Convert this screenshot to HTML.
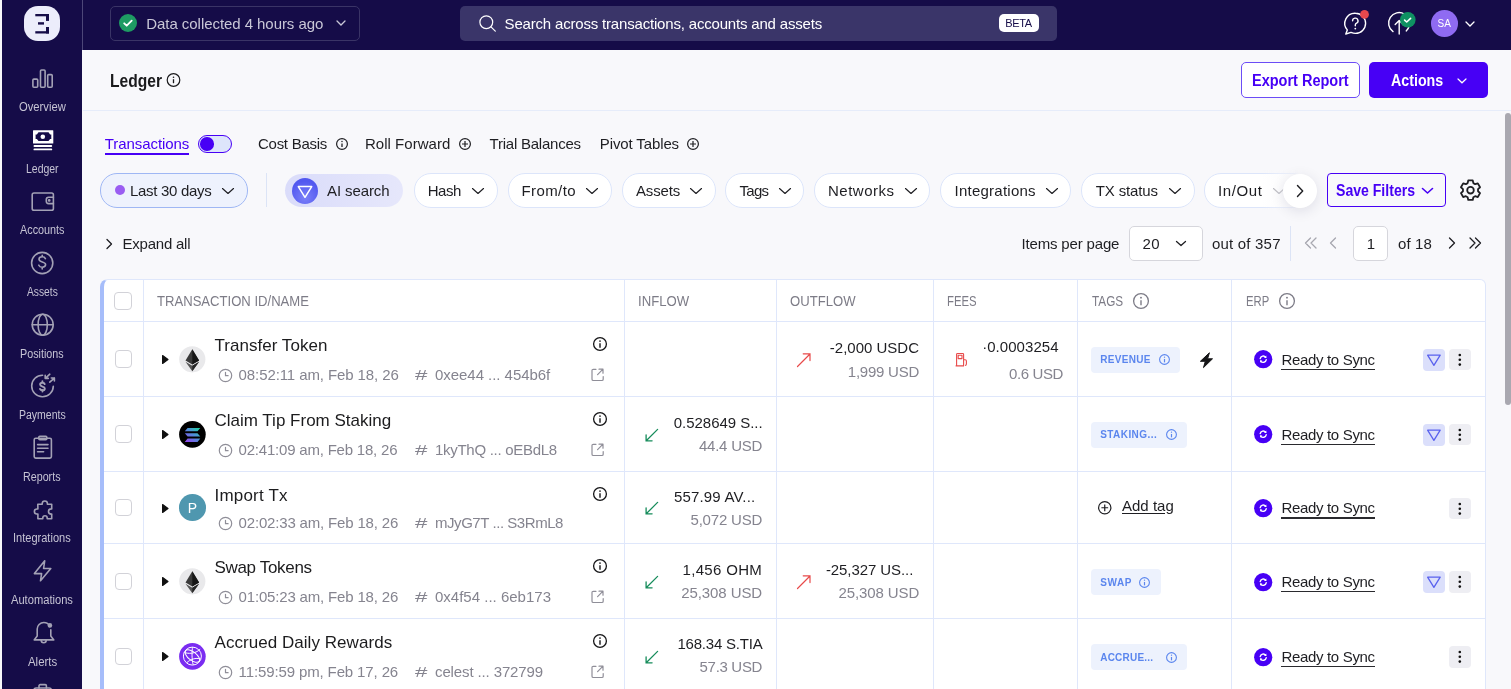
<!DOCTYPE html>
<html><head><meta charset="utf-8"><style>
html,body{margin:0;padding:0;width:1511px;height:689px;overflow:hidden;background:#F8F8FB;font-family:"Liberation Sans", sans-serif;}
svg{overflow:visible}
</style></head><body><div style="position:absolute;left:0;top:0;width:1511px;height:689px;overflow:hidden;will-change:transform">
<div style="position:absolute;left:2px;top:0px;width:80px;height:689px;background:#150C48;border-radius:0;"></div>
<div style="position:absolute;left:24px;top:6px;width:36px;height:35px;background:#ECEDFB;border-radius:14px;"></div>
<svg style="position:absolute;left:24px;top:6px;" width="36" height="35" viewBox="0 0 36 35"><g fill="#150C48"><rect x="11.3" y="8" width="13.7" height="2.3"/><rect x="22" y="8" width="3" height="6.9"/><rect x="14" y="16.2" width="6" height="2.4"/><rect x="22" y="21" width="3" height="6.5"/><rect x="11.3" y="25.2" width="13.7" height="2.3"/></g></svg>
<div style="position:absolute;left:18.70px;top:101px;font-size:12px;line-height:12px;font-weight:400;color:#C6C4D4;white-space:pre;transform:scaleX(0.9357);transform-origin:0 0;">Overview</div>
<div style="position:absolute;left:25.80px;top:163px;font-size:12px;line-height:12px;font-weight:400;color:#C6C4D4;white-space:pre;transform:scaleX(0.8722);transform-origin:0 0;">Ledger</div>
<div style="position:absolute;left:19.85px;top:224px;font-size:12px;line-height:12px;font-weight:400;color:#C6C4D4;white-space:pre;transform:scaleX(0.9016);transform-origin:0 0;">Accounts</div>
<div style="position:absolute;left:26.70px;top:286px;font-size:12px;line-height:12px;font-weight:400;color:#C6C4D4;white-space:pre;transform:scaleX(0.8552);transform-origin:0 0;">Assets</div>
<div style="position:absolute;left:20.30px;top:348px;font-size:12px;line-height:12px;font-weight:400;color:#C6C4D4;white-space:pre;transform:scaleX(0.8952);transform-origin:0 0;">Positions</div>
<div style="position:absolute;left:18.75px;top:409px;font-size:12px;line-height:12px;font-weight:400;color:#C6C4D4;white-space:pre;transform:scaleX(0.8752);transform-origin:0 0;">Payments</div>
<div style="position:absolute;left:23.35px;top:471px;font-size:12px;line-height:12px;font-weight:400;color:#C6C4D4;white-space:pre;transform:scaleX(0.8922);transform-origin:0 0;">Reports</div>
<div style="position:absolute;left:13.25px;top:532px;font-size:12px;line-height:12px;font-weight:400;color:#C6C4D4;white-space:pre;transform:scaleX(0.9200);transform-origin:0 0;">Integrations</div>
<div style="position:absolute;left:11.15px;top:594px;font-size:12px;line-height:12px;font-weight:400;color:#C6C4D4;white-space:pre;transform:scaleX(0.9280);transform-origin:0 0;">Automations</div>
<div style="position:absolute;left:27.50px;top:656px;font-size:12px;line-height:12px;font-weight:400;color:#C6C4D4;white-space:pre;transform:scaleX(0.9515);transform-origin:0 0;">Alerts</div>
<svg style="position:absolute;left:22px;top:60px;" width="40" height="40" viewBox="0 0 40 40"><g stroke-width="1.6" fill="none" stroke="#A3A1B5" stroke-linecap="round" stroke-linejoin="round"><rect x="10.9" y="19.1" width="4.8" height="8.1" rx="1"/><rect x="18.5" y="10" width="4.6" height="17.2" rx="1"/><rect x="25.7" y="14.6" width="4.5" height="12.6" rx="1"/></g></svg>
<svg style="position:absolute;left:22px;top:120px;" width="40" height="40" viewBox="0 0 40 40"><path fill="#fff" fill-rule="evenodd" d="M11.5 10.2h19.3a0.5 0.5 0 0 1 .5.5v12.4a.5.5 0 0 1-.5.5H11.5a.5.5 0 0 1-.5-.5V10.7a.5.5 0 0 1 .5-.5zM16.5 12.3h10l1.6 2.2 0.8 0h0.4v4.6h-1.2l-1.6 2h-10l-1.6-2h-1.3v-4.6h1.3z"/><circle cx="20.8" cy="16.8" r="2.3" fill="#fff"/><rect x="11.5" y="25.1" width="18.7" height="1.9" rx=".9" fill="#fff"/><rect x="11.5" y="28.4" width="18.7" height="1.9" rx=".9" fill="#fff"/></svg>
<svg style="position:absolute;left:22px;top:182px;" width="40" height="40" viewBox="0 0 40 40"><g stroke-width="1.6" fill="none" stroke="#A3A1B5" stroke-linecap="round" stroke-linejoin="round"><rect x="10.2" y="11" width="21.2" height="17.2" rx="1.8"/><path d="M31.4 15.2h-4.8a2.3 2.3 0 0 0-2.3 2.3v1.8a2.3 2.3 0 0 0 2.3 2.3h4.8"/><circle cx="27.2" cy="18.4" r=".6" fill="#A3A1B5"/></g></svg>
<svg style="position:absolute;left:22px;top:243px;" width="40" height="40" viewBox="0 0 40 40"><g stroke-width="1.6" fill="none" stroke="#A3A1B5" stroke-linecap="round" stroke-linejoin="round"><circle cx="20.2" cy="20" r="10.6"/><path d="M23.4 15.6c-.5-1.1-1.7-1.8-3.2-1.8-1.9 0-3.2 1-3.2 2.5 0 3.4 6.6 1.8 6.6 5.3 0 1.6-1.4 2.6-3.4 2.6-1.6 0-2.9-.8-3.4-2M20.2 12.2v1.6M20.2 24.2v1.7"/></g></svg>
<svg style="position:absolute;left:22px;top:304px;" width="40" height="40" viewBox="0 0 40 40"><g stroke-width="1.6" fill="none" stroke="#A3A1B5" stroke-linecap="round" stroke-linejoin="round"><circle cx="20.7" cy="20.7" r="10.5"/><ellipse cx="20.7" cy="20.7" rx="4.6" ry="10.5"/><path d="M10.2 20.7h21"/></g></svg>
<svg style="position:absolute;left:22px;top:365px;" width="40" height="40" viewBox="0 0 40 40"><g stroke-width="1.6" fill="none" stroke="#A3A1B5" stroke-linecap="round" stroke-linejoin="round"><path d="M20.6 10.2a10.8 10.8 0 1 0 10.7 11"/><path d="M27.8 9.2l-4.5 4.1M23.2 10.4v3h3.1M27.8 17.2l4.6-4.1M29.3 13h3.1v3"/><path d="M22.7 19.1c-.3-.8-1.2-1.3-2.3-1.3-1.3 0-2.3.7-2.3 1.8 0 2.5 4.7 1.4 4.7 3.8 0 1.1-1 1.9-2.4 1.9-1.1 0-2.1-.5-2.4-1.4M20.4 16.2v1.4M20.4 25v1.5" stroke-width="1.9"/></g></svg>
<svg style="position:absolute;left:22px;top:427px;" width="40" height="40" viewBox="0 0 40 40"><g stroke-width="1.6" fill="none" stroke="#A3A1B5" stroke-linecap="round" stroke-linejoin="round"><rect x="12.2" y="11.2" width="17.2" height="19.9" rx="1.5"/><rect x="16.8" y="9.2" width="8" height="3.6" rx="1"/><path d="M15.6 17.6h10.4M15.6 21.2h10.4M15.6 24.8h6"/></g></svg>
<svg style="position:absolute;left:22px;top:490px;" width="40" height="40" viewBox="0 0 40 40"><g stroke-width="1.6" fill="none" stroke="#A3A1B5" stroke-linecap="round" stroke-linejoin="round"><path d="M15.8 14.3h4.4v-.7a2.6 2.6 0 0 1 5.2 0v.7h4.3v4.6h-.6a2.6 2.6 0 0 0 0 5.2h.6v4.7h-4.5v-.9a2.2 2.2 0 0 0-4.4 0v.9h-4.9v-4.8h-1a2.5 2.5 0 0 1 0-5h1z"/></g></svg>
<svg style="position:absolute;left:22px;top:550px;" width="40" height="40" viewBox="0 0 40 40"><g stroke-width="1.6" fill="none" stroke="#A3A1B5" stroke-linecap="round" stroke-linejoin="round"><path d="M22.7 10.8L12.4 23.6h7.2l-1.1 7.2 10.3-12.3h-7.2z"/></g></svg>
<svg style="position:absolute;left:22px;top:612px;" width="40" height="40" viewBox="0 0 40 40"><g stroke-width="1.6" fill="none" stroke="#A3A1B5" stroke-linecap="round" stroke-linejoin="round"><path d="M27.8 14.4c-1-2.3-3.3-3.9-6-3.9-3.7 0-6.6 3-6.6 6.6v6.8l-3 4h19.6l-3-4v-6.2"/><path d="M19.2 28.2a2.5 2.5 0 0 0 5 0"/></g><circle cx="27.9" cy="13.4" r="2.3" fill="#A3A1B5"/></svg>
<svg style="position:absolute;left:22px;top:678px;" width="40" height="20" viewBox="0 0 40 20"><g stroke-width="1.6" fill="none" stroke="#A3A1B5" stroke-linecap="round" stroke-linejoin="round"><rect x="12" y="10" width="17.3" height="14" rx="2"/><path d="M17 10V7.8a1.2 1.2 0 0 1 1.2-1.2h5a1.2 1.2 0 0 1 1.2 1.2V10"/></g></svg>
<div style="position:absolute;left:82px;top:0px;width:1429px;height:50px;background:#150C48;border-radius:0;"></div>
<div style="position:absolute;left:82px;top:0px;width:1px;height:50px;background:#4D4778;border-radius:0;"></div>
<div style="position:absolute;left:109.5px;top:6px;width:250.5px;height:34.5px;background:transparent;border:1px solid #3A3466;box-sizing:border-box;border-radius:5px;"></div>
<svg style="position:absolute;left:119px;top:14px;" width="18" height="18" viewBox="0 0 18 18"><circle cx="9" cy="9" r="9" fill="#1E9B63"/><path d="M5.2 9.3l2.5 2.4 5-5" stroke="#fff" stroke-width="1.8" fill="none" stroke-linecap="round" stroke-linejoin="round"/></svg>
<div style="position:absolute;left:146.30px;top:16px;font-size:15px;line-height:15px;font-weight:400;color:#C9C7D7;white-space:pre;letter-spacing:-0.056px;">Data collected 4 hours ago</div>
<svg style="position:absolute;left:335px;top:19px;" width="12" height="8" viewBox="0 0 12 8"><path d="M2 2l4 4 4-4" stroke="#C9C7D7" stroke-width="1.3" fill="none" stroke-linecap="round"/></svg>
<div style="position:absolute;left:459.5px;top:6px;width:597.5px;height:34.5px;background:#3A3569;border-radius:5px;"></div>
<svg style="position:absolute;left:478px;top:14px;" width="20" height="20" viewBox="0 0 20 20"><circle cx="8.3" cy="8.2" r="6.4" stroke="#fff" stroke-width="1.2" fill="none"/><path d="M13 12.8l4.3 4.3" stroke="#fff" stroke-width="1.2" stroke-linecap="round"/></svg>
<div style="position:absolute;left:504.60px;top:16px;font-size:15px;line-height:15px;font-weight:400;color:#FFFFFF;white-space:pre;letter-spacing:-0.183px;">Search across transactions, accounts and assets</div>
<div style="position:absolute;left:998.5px;top:14px;width:40px;height:18px;background:#FFFFFF;border-radius:5px;"></div>
<div style="position:absolute;left:1005.20px;top:18.3px;font-size:11px;line-height:11px;font-weight:400;color:#150C48;white-space:pre;letter-spacing:-0.330px;">BETA</div>
<svg style="position:absolute;left:1340px;top:9px;" width="32" height="28" viewBox="0 0 32 28"><path d="M15.5 4.2a10.1 10.1 0 0 1 0 20.2c-1.6 0-3.1-.4-4.5-1l-5.2 1.6 1.5-4.1A10.1 10.1 0 0 1 15.5 4.2z" stroke="#fff" stroke-width="1.4" fill="none" stroke-linejoin="round"/><path d="M12.6 11.8a2.7 2.7 0 1 1 4 2.4c-.8.4-1.3 1-1.3 1.9v.7" stroke="#fff" stroke-width="1.4" fill="none" stroke-linecap="round"/><circle cx="15.3" cy="19.6" r=".9" fill="#fff"/><circle cx="24.5" cy="5.4" r="4.4" fill="#E5484D"/></svg>
<svg style="position:absolute;left:1385px;top:8px;" width="34" height="30" viewBox="0 0 34 30"><path d="M8.03 23.6A10.5 10.5 0 0 1 19.45 6.0M21.2 22.9A10.5 10.5 0 0 0 24.3 17.8" stroke="#fff" stroke-width="1.4" fill="none" stroke-linecap="round"/><path d="M14.2 26.1V12.4M10.2 16.4l4-4 4 4" stroke="#fff" stroke-width="1.4" fill="none" stroke-linecap="round" stroke-linejoin="round"/><circle cx="22.8" cy="11.8" r="7.8" fill="#0F9162"/><path d="M19.6 12.1l2.1 1.9 3.9-3.7" stroke="#fff" stroke-width="1.6" fill="none" stroke-linecap="round" stroke-linejoin="round"/></svg>
<div style="position:absolute;left:1431px;top:10px;width:26.5px;height:26.5px;background:#8F6BF2;border-radius:50%;"></div>
<div style="position:absolute;left:1437.53px;top:19px;font-size:10px;line-height:10px;font-weight:400;color:#FFFFFF;white-space:pre;">SA</div>
<svg style="position:absolute;left:1464px;top:20px;" width="12" height="8" viewBox="0 0 12 8"><path d="M2 2l4 4 4-4" stroke="#fff" stroke-width="1.3" fill="none" stroke-linecap="round"/></svg>
<div style="position:absolute;left:83px;top:110px;width:1428px;height:1px;background:#E6ECFA;border-radius:0;"></div>
<div style="position:absolute;left:109.70px;top:72px;font-size:18px;line-height:18px;font-weight:700;color:#1A1A1C;white-space:pre;transform:scaleX(0.8664);transform-origin:0 0;">Ledger</div>
<svg style="position:absolute;left:166px;top:73px;" width="15" height="15" viewBox="0 0 15 15"><circle cx="7.5" cy="7" r="6.3" stroke="#1A1A1C" stroke-width="1.2" fill="none"/><path d="M7.5 6.2v4" stroke="#1A1A1C" stroke-width="1.3"/><circle cx="7.5" cy="4.2" r=".8" fill="#1A1A1C"/></svg>
<div style="position:absolute;left:1241px;top:62px;width:119px;height:35.5px;background:#FFFFFF;border:1.5px solid #6C4DF6;box-sizing:border-box;border-radius:5px;"></div>
<div style="position:absolute;left:1252.30px;top:72.6px;font-size:16px;line-height:16px;font-weight:700;color:#4700F5;white-space:pre;transform:scaleX(0.9065);transform-origin:0 0;">Export Report</div>
<div style="position:absolute;left:1369px;top:62px;width:118.5px;height:35.5px;background:#4700F5;border-radius:5px;"></div>
<div style="position:absolute;left:1390.80px;top:72.6px;font-size:16px;line-height:16px;font-weight:700;color:#FFFFFF;white-space:pre;transform:scaleX(0.8897);transform-origin:0 0;">Actions</div>
<svg style="position:absolute;left:1455.5px;top:77px;" width="12" height="8" viewBox="0 0 12 8"><path d="M2 2l4 3.8 4-3.8" stroke="#fff" stroke-width="1.2" fill="none" stroke-linecap="round"/></svg>
<div style="position:absolute;left:104.80px;top:135.6px;font-size:15px;line-height:15px;font-weight:400;color:#4700F5;white-space:pre;letter-spacing:-0.068px;">Transactions</div>
<div style="position:absolute;left:104.8px;top:152.5px;width:84.5px;height:2px;background:#4700F5;border-radius:0;"></div>
<div style="position:absolute;left:198px;top:135px;width:34px;height:17.5px;background:#DDE5FB;border:1.5px solid #4700F5;box-sizing:border-box;border-radius:9px;"></div>
<div style="position:absolute;left:200.2px;top:137px;width:13.6px;height:13.6px;background:#4700F5;border-radius:50%;"></div>
<div style="position:absolute;left:258.00px;top:135.6px;font-size:15px;line-height:15px;font-weight:400;color:#1E1E22;white-space:pre;letter-spacing:-0.270px;">Cost Basis</div>
<svg style="position:absolute;left:335px;top:137px;" width="14" height="14" viewBox="0 0 14 14"><circle cx="7.0" cy="7.0" r="5.4" stroke="#1E1E22" stroke-width="1.2" fill="none"/><path d="M7.0 6.4v3.7199999999999998" stroke="#1E1E22" stroke-width="1.3"/><circle cx="7.0" cy="4.48" r="0.72" fill="#1E1E22"/></svg>
<div style="position:absolute;left:365.00px;top:135.6px;font-size:15px;line-height:15px;font-weight:400;color:#1E1E22;white-space:pre;letter-spacing:0.022px;">Roll Forward</div>
<svg style="position:absolute;left:457.5px;top:137.3px;" width="14" height="14" viewBox="0 0 14 14"><circle cx="7.0" cy="7.0" r="5.4" stroke="#1E1E22" stroke-width="1.2" fill="none"/><path d="M4.0 7.0h6.0M7.0 4.0v6.0" stroke="#1E1E22" stroke-width="1.2"/></svg>
<div style="position:absolute;left:489.60px;top:135.6px;font-size:15px;line-height:15px;font-weight:400;color:#1E1E22;white-space:pre;letter-spacing:-0.235px;">Trial Balances</div>
<div style="position:absolute;left:599.80px;top:135.6px;font-size:15px;line-height:15px;font-weight:400;color:#1E1E22;white-space:pre;letter-spacing:-0.117px;">Pivot Tables</div>
<svg style="position:absolute;left:686px;top:137.3px;" width="14" height="14" viewBox="0 0 14 14"><circle cx="7.0" cy="7.0" r="5.4" stroke="#1E1E22" stroke-width="1.2" fill="none"/><path d="M4.0 7.0h6.0M7.0 4.0v6.0" stroke="#1E1E22" stroke-width="1.2"/></svg>
<div style="position:absolute;left:100px;top:173px;width:148px;height:34.5px;background:#EEF2FD;border:1px solid #9FB7F4;box-sizing:border-box;border-radius:17px;"></div>
<div style="position:absolute;left:114.5px;top:185px;width:10px;height:10px;background:#9A5DF2;border-radius:50%;"></div>
<div style="position:absolute;left:130.00px;top:182.7px;font-size:15px;line-height:15px;font-weight:400;color:#1E1E22;white-space:pre;letter-spacing:-0.297px;">Last 30 days</div>
<svg style="position:absolute;left:221px;top:186.5px;" width="13" height="8" viewBox="0 0 13 8"><path d="M1.5 1.5l5.5 5.0 5.5-5.0" stroke="#1E1E22" stroke-width="1.15" fill="none" stroke-linecap="round" stroke-linejoin="round"/></svg>
<div style="position:absolute;left:266px;top:173px;width:1px;height:34px;background:#DCE4F6;border-radius:0;"></div>
<div style="position:absolute;left:284.6px;top:174px;width:118.4px;height:33px;background:linear-gradient(90deg,#DADCFA,#E6E7FB);border-radius:17px;"></div>
<div style="position:absolute;left:292px;top:177.5px;width:26px;height:26px;background:radial-gradient(circle at 50% 75%,#7B80F8,#5258F0 70%);border-radius:50%;"></div>
<svg style="position:absolute;left:292px;top:177.5px;" width="26" height="26" viewBox="0 0 26 26"><path d="M6.3 8.6h13.4L13 19.3z" stroke="#fff" stroke-width="1.5" fill="none" stroke-linejoin="round"/></svg>
<div style="position:absolute;left:327.00px;top:182.7px;font-size:15px;line-height:15px;font-weight:400;color:#1E1E22;white-space:pre;letter-spacing:-0.097px;">AI search</div>
<div style="position:absolute;left:413.5px;top:173px;width:84.10000000000002px;height:34.5px;background:#FFFFFF;border:1px solid #DCE5FA;box-sizing:border-box;border-radius:17px;"></div>
<div style="position:absolute;left:427.70px;top:182.7px;font-size:15px;line-height:15px;font-weight:400;color:#1E1E22;white-space:pre;letter-spacing:-0.433px;">Hash</div>
<svg style="position:absolute;left:471px;top:186.5px;" width="13" height="8" viewBox="0 0 13 8"><path d="M1.5 1.5l5.5 5.0 5.5-5.0" stroke="#1E1E22" stroke-width="1.15" fill="none" stroke-linecap="round" stroke-linejoin="round"/></svg>
<div style="position:absolute;left:507.8px;top:173px;width:104.40000000000003px;height:34.5px;background:#FFFFFF;border:1px solid #DCE5FA;box-sizing:border-box;border-radius:17px;"></div>
<div style="position:absolute;left:521.50px;top:182.7px;font-size:15px;line-height:15px;font-weight:400;color:#1E1E22;white-space:pre;letter-spacing:0.402px;">From/to</div>
<svg style="position:absolute;left:585px;top:186.5px;" width="13" height="8" viewBox="0 0 13 8"><path d="M1.5 1.5l5.5 5.0 5.5-5.0" stroke="#1E1E22" stroke-width="1.15" fill="none" stroke-linecap="round" stroke-linejoin="round"/></svg>
<div style="position:absolute;left:622px;top:173px;width:94px;height:34.5px;background:#FFFFFF;border:1px solid #DCE5FA;box-sizing:border-box;border-radius:17px;"></div>
<div style="position:absolute;left:636.00px;top:182.7px;font-size:15px;line-height:15px;font-weight:400;color:#1E1E22;white-space:pre;letter-spacing:-0.169px;">Assets</div>
<svg style="position:absolute;left:689px;top:186.5px;" width="13" height="8" viewBox="0 0 13 8"><path d="M1.5 1.5l5.5 5.0 5.5-5.0" stroke="#1E1E22" stroke-width="1.15" fill="none" stroke-linecap="round" stroke-linejoin="round"/></svg>
<div style="position:absolute;left:725.3px;top:173px;width:79.10000000000002px;height:34.5px;background:#FFFFFF;border:1px solid #DCE5FA;box-sizing:border-box;border-radius:17px;"></div>
<div style="position:absolute;left:739.50px;top:182.7px;font-size:15px;line-height:15px;font-weight:400;color:#1E1E22;white-space:pre;letter-spacing:-0.697px;">Tags</div>
<svg style="position:absolute;left:777.7px;top:186.5px;" width="13" height="8" viewBox="0 0 13 8"><path d="M1.5 1.5l5.5 5.0 5.5-5.0" stroke="#1E1E22" stroke-width="1.15" fill="none" stroke-linecap="round" stroke-linejoin="round"/></svg>
<div style="position:absolute;left:814px;top:173px;width:116px;height:34.5px;background:#FFFFFF;border:1px solid #DCE5FA;box-sizing:border-box;border-radius:17px;"></div>
<div style="position:absolute;left:828.00px;top:182.7px;font-size:15px;line-height:15px;font-weight:400;color:#1E1E22;white-space:pre;letter-spacing:0.498px;">Networks</div>
<svg style="position:absolute;left:903.8px;top:186.5px;" width="13" height="8" viewBox="0 0 13 8"><path d="M1.5 1.5l5.5 5.0 5.5-5.0" stroke="#1E1E22" stroke-width="1.15" fill="none" stroke-linecap="round" stroke-linejoin="round"/></svg>
<div style="position:absolute;left:940.3px;top:173px;width:131.0px;height:34.5px;background:#FFFFFF;border:1px solid #DCE5FA;box-sizing:border-box;border-radius:17px;"></div>
<div style="position:absolute;left:954.50px;top:182.7px;font-size:15px;line-height:15px;font-weight:400;color:#1E1E22;white-space:pre;letter-spacing:0.242px;">Integrations</div>
<svg style="position:absolute;left:1044.6px;top:186.5px;" width="13" height="8" viewBox="0 0 13 8"><path d="M1.5 1.5l5.5 5.0 5.5-5.0" stroke="#1E1E22" stroke-width="1.15" fill="none" stroke-linecap="round" stroke-linejoin="round"/></svg>
<div style="position:absolute;left:1081px;top:173px;width:113.5px;height:34.5px;background:#FFFFFF;border:1px solid #DCE5FA;box-sizing:border-box;border-radius:17px;"></div>
<div style="position:absolute;left:1095.80px;top:182.7px;font-size:15px;line-height:15px;font-weight:400;color:#1E1E22;white-space:pre;letter-spacing:-0.151px;">TX status</div>
<svg style="position:absolute;left:1168px;top:186.5px;" width="13" height="8" viewBox="0 0 13 8"><path d="M1.5 1.5l5.5 5.0 5.5-5.0" stroke="#1E1E22" stroke-width="1.15" fill="none" stroke-linecap="round" stroke-linejoin="round"/></svg>
<div style="position:absolute;left:1204px;top:173px;width:106px;height:34.5px;background:#FFFFFF;border:1px solid #DCE5FA;box-sizing:border-box;border-radius:17px;"></div>
<div style="position:absolute;left:1218.00px;top:182.7px;font-size:15px;line-height:15px;font-weight:400;color:#1E1E22;white-space:pre;letter-spacing:0.623px;">In/Out</div>
<svg style="position:absolute;left:1272px;top:186.5px;" width="13" height="8" viewBox="0 0 13 8"><path d="M1.5 1.5l5.5 5.0 5.5-5.0" stroke="#A9A9B0" stroke-width="1.15" fill="none" stroke-linecap="round" stroke-linejoin="round"/></svg>
<div style="position:absolute;left:1262px;top:170px;width:40px;height:40px;background:linear-gradient(90deg,rgba(248,248,251,0),rgba(248,248,251,.85));border-radius:0;"></div>
<div style="position:absolute;left:1282.5px;top:173.5px;width:34px;height:34px;background:#FFFFFF;border-radius:50%;box-shadow:0 3px 14px rgba(20,20,60,.11);"></div>
<svg style="position:absolute;left:1294px;top:184px;" width="14" height="14" viewBox="0 0 14 14"><path d="M3.5 1.5l5.2 5.5-5.2 5.5" stroke="#1E1E22" stroke-width="1.4" fill="none" stroke-linecap="round" stroke-linejoin="round"/></svg>
<div style="position:absolute;left:1327px;top:173.3px;width:119px;height:34.2px;background:transparent;border:1.5px solid #4700F5;box-sizing:border-box;border-radius:4px;"></div>
<div style="position:absolute;left:1336.00px;top:183px;font-size:16px;line-height:16px;font-weight:700;color:#4700F5;white-space:pre;transform:scaleX(0.8795);transform-origin:0 0;">Save Filters</div>
<svg style="position:absolute;left:1421px;top:187px;" width="12" height="8" viewBox="0 0 12 8"><path d="M1.5 1.5l5.0 4.5 5.0-4.5" stroke="#4700F5" stroke-width="1.6" fill="none" stroke-linecap="round" stroke-linejoin="round"/></svg>
<svg style="position:absolute;left:1458.5px;top:179px;" width="23" height="23" viewBox="0 0 23 23"><path d="M19.03 12.26 L21.06 14.12 L18.81 18.02 L16.18 17.19 L14.35 18.25 L13.75 20.94 L9.25 20.94 L8.65 18.25 L6.82 17.19 L4.19 18.02 L1.94 14.12 L3.97 12.26 L3.97 10.14 L1.94 8.28 L4.19 4.38 L6.82 5.21 L8.65 4.15 L9.25 1.46 L13.75 1.46 L14.35 4.15 L16.18 5.21 L18.81 4.38 L21.06 8.28 L19.03 10.14Z" stroke="#1E1E22" stroke-width="1.8" fill="none" stroke-linejoin="round"/><circle cx="11.5" cy="11.2" r="3.3" stroke="#1E1E22" stroke-width="1.8" fill="none"/></svg>
<svg style="position:absolute;left:104px;top:238px;" width="12" height="12" viewBox="0 0 12 12"><path d="M3 1.5l4.5 4.5L3 10.5" stroke="#1E1E22" stroke-width="1.3" fill="none" stroke-linecap="round" stroke-linejoin="round"/></svg>
<div style="position:absolute;left:122.50px;top:235.8px;font-size:15px;line-height:15px;font-weight:400;color:#1E1E22;white-space:pre;letter-spacing:-0.226px;">Expand all</div>
<div style="position:absolute;left:1021.50px;top:236px;font-size:15px;line-height:15px;font-weight:400;color:#1E1E22;white-space:pre;letter-spacing:-0.162px;">Items per page</div>
<div style="position:absolute;left:1129px;top:226px;width:74px;height:34.5px;background:#FFFFFF;border:1px solid #D6D6DC;box-sizing:border-box;border-radius:5px;"></div>
<div style="position:absolute;left:1142.40px;top:236px;font-size:15px;line-height:15px;font-weight:400;color:#1E1E22;white-space:pre;letter-spacing:0.456px;">20</div>
<svg style="position:absolute;left:1175px;top:240px;" width="11" height="8" viewBox="0 0 11 8"><path d="M1.5 1.5l4.5 4.0 4.5-4.0" stroke="#1E1E22" stroke-width="1.3" fill="none" stroke-linecap="round" stroke-linejoin="round"/></svg>
<div style="position:absolute;left:1212.00px;top:236px;font-size:15px;line-height:15px;font-weight:400;color:#1E1E22;white-space:pre;letter-spacing:0.197px;">out of 357</div>
<div style="position:absolute;left:1290px;top:226px;width:1px;height:34.7px;background:#DCE4F6;border-radius:0;"></div>
<svg style="position:absolute;left:1303px;top:236px;" width="16" height="14" viewBox="0 0 16 14"><path d="M7.5 2l-5 5 5 5M13 2l-5 5 5 5" stroke="#A7A7AF" stroke-width="1.3" fill="none" stroke-linecap="round" stroke-linejoin="round"/></svg>
<svg style="position:absolute;left:1327px;top:236px;" width="12" height="14" viewBox="0 0 12 14"><path d="M8.5 2l-5 5 5 5" stroke="#A7A7AF" stroke-width="1.3" fill="none" stroke-linecap="round" stroke-linejoin="round"/></svg>
<div style="position:absolute;left:1353px;top:226px;width:35.4px;height:34.5px;background:#FFFFFF;border:1px solid #D6D6DC;box-sizing:border-box;border-radius:5px;"></div>
<div style="position:absolute;left:1366.83px;top:236px;font-size:15px;line-height:15px;font-weight:400;color:#1E1E22;white-space:pre;">1</div>
<div style="position:absolute;left:1398.00px;top:236px;font-size:15px;line-height:15px;font-weight:400;color:#1E1E22;white-space:pre;letter-spacing:0.125px;">of 18</div>
<svg style="position:absolute;left:1446px;top:236px;" width="12" height="14" viewBox="0 0 12 14"><path d="M3.5 2l5 5-5 5" stroke="#1E1E22" stroke-width="1.3" fill="none" stroke-linecap="round" stroke-linejoin="round"/></svg>
<svg style="position:absolute;left:1467px;top:236px;" width="16" height="14" viewBox="0 0 16 14"><path d="M3 2l5 5-5 5M8.5 2l5 5-5 5" stroke="#1E1E22" stroke-width="1.3" fill="none" stroke-linecap="round" stroke-linejoin="round"/></svg>
<div style="position:absolute;left:100px;top:279px;width:1386px;height:420px;background:#FFFFFF;border:1px solid #DFE7FB;box-sizing:border-box;border-radius:8px 6px 0 0;border-left:4px solid #A6BDFA;"></div>
<div style="position:absolute;left:143px;top:280px;width:1px;height:420px;background:#DFE7FB;border-radius:0;"></div>
<div style="position:absolute;left:624px;top:280px;width:1px;height:420px;background:#DFE7FB;border-radius:0;"></div>
<div style="position:absolute;left:776px;top:280px;width:1px;height:420px;background:#DFE7FB;border-radius:0;"></div>
<div style="position:absolute;left:933px;top:280px;width:1px;height:420px;background:#DFE7FB;border-radius:0;"></div>
<div style="position:absolute;left:1077px;top:280px;width:1px;height:420px;background:#DFE7FB;border-radius:0;"></div>
<div style="position:absolute;left:1231px;top:280px;width:1px;height:420px;background:#DFE7FB;border-radius:0;"></div>
<div style="position:absolute;left:104px;top:321px;width:1381px;height:1px;background:#DFE7FB;border-radius:0;"></div>
<div style="position:absolute;left:104px;top:396px;width:1381px;height:1px;background:#DFE7FB;border-radius:0;"></div>
<div style="position:absolute;left:104px;top:471px;width:1381px;height:1px;background:#DFE7FB;border-radius:0;"></div>
<div style="position:absolute;left:104px;top:543px;width:1381px;height:1px;background:#DFE7FB;border-radius:0;"></div>
<div style="position:absolute;left:104px;top:618px;width:1381px;height:1px;background:#DFE7FB;border-radius:0;"></div>
<div style="position:absolute;left:114.4px;top:292.3px;width:17.4px;height:17.4px;background:#FFFFFF;border:1px solid #D2D2D8;box-sizing:border-box;border-radius:4px;"></div>
<div style="position:absolute;left:157.00px;top:294.3px;font-size:14px;line-height:14px;font-weight:400;color:#7D7C87;white-space:pre;transform:scaleX(0.9349);transform-origin:0 0;">TRANSACTION ID/NAME</div>
<div style="position:absolute;left:638.40px;top:294.3px;font-size:14px;line-height:14px;font-weight:400;color:#7D7C87;white-space:pre;transform:scaleX(0.9384);transform-origin:0 0;">INFLOW</div>
<div style="position:absolute;left:790.00px;top:294.3px;font-size:14px;line-height:14px;font-weight:400;color:#7D7C87;white-space:pre;transform:scaleX(0.9357);transform-origin:0 0;">OUTFLOW</div>
<div style="position:absolute;left:946.80px;top:294.3px;font-size:14px;line-height:14px;font-weight:400;color:#7D7C87;white-space:pre;transform:scaleX(0.8092);transform-origin:0 0;">FEES</div>
<div style="position:absolute;left:1091.50px;top:294.3px;font-size:14px;line-height:14px;font-weight:400;color:#7D7C87;white-space:pre;transform:scaleX(0.8388);transform-origin:0 0;">TAGS</div>
<svg style="position:absolute;left:1131.8px;top:292px;" width="18" height="18" viewBox="0 0 18 18"><circle cx="9.0" cy="9.0" r="7.4" stroke="#7D7C87" stroke-width="1.3" fill="none"/><path d="M9.0 8.2v4.96" stroke="#7D7C87" stroke-width="1.4000000000000001"/><circle cx="9.0" cy="5.640000000000001" r="0.96" fill="#7D7C87"/></svg>
<div style="position:absolute;left:1245.80px;top:294.3px;font-size:14px;line-height:14px;font-weight:400;color:#7D7C87;white-space:pre;transform:scaleX(0.8056);transform-origin:0 0;">ERP</div>
<svg style="position:absolute;left:1278px;top:292px;" width="18" height="18" viewBox="0 0 18 18"><circle cx="9.0" cy="9.0" r="7.4" stroke="#7D7C87" stroke-width="1.3" fill="none"/><path d="M9.0 8.2v4.96" stroke="#7D7C87" stroke-width="1.4000000000000001"/><circle cx="9.0" cy="5.640000000000001" r="0.96" fill="#7D7C87"/></svg>
<div style="position:absolute;left:114.5px;top:350.25000000000006px;width:17.4px;height:17.4px;background:#FFFFFF;border:1px solid #D2D2D8;box-sizing:border-box;border-radius:4px;"></div>
<svg style="position:absolute;left:160.5px;top:353.95000000000005px;" width="9" height="11" viewBox="0 0 9 11"><path d="M1.6 1.6l5.4 3.9-5.4 3.9z" fill="#111" stroke="#111" stroke-width="1.2" stroke-linejoin="round"/></svg>
<svg style="position:absolute;left:179px;top:345.65000000000003px;" width="27" height="27" viewBox="0 0 27 27"><circle cx="13.3" cy="13.3" r="13.1" fill="#E9E9EB"/><path d="M13.3 3.2L6.5 14.4l6.8 4 6.8-4z" fill="#3A3A3A"/><path d="M13.3 3.2v15.2l6.8-4z" fill="#161616"/><path d="M13.3 19.8l-6.8-4 6.8 9.4 6.8-9.4z" fill="#555"/><path d="M13.3 19.8v5.4l6.8-9.4z" fill="#262626"/></svg>
<div style="position:absolute;left:214.50px;top:336.8px;font-size:17px;line-height:17px;font-weight:400;color:#1C1C1E;white-space:pre;letter-spacing:0.032px;">Transfer Token</div>
<svg style="position:absolute;left:218px;top:368.20000000000005px;" width="15" height="15" viewBox="0 0 15 15"><circle cx="7.5" cy="7.5" r="6.2" stroke="#8F8E98" stroke-width="1.2" fill="none"/><path d="M7.5 4.3v3.4h2.6" stroke="#8F8E98" stroke-width="1.2" fill="none" stroke-linecap="round"/></svg>
<div style="position:absolute;left:238.60px;top:367.20000000000005px;font-size:15px;line-height:15px;font-weight:400;color:#85848F;white-space:pre;letter-spacing:-0.098px;">08:52:11 am, Feb 18, 26</div>
<div style="position:absolute;left:414.90px;top:367.20000000000005px;font-size:15px;line-height:15px;font-weight:400;color:#85848F;white-space:pre;transform:scaleX(1.4861);transform-origin:0 0;">#</div>
<div style="position:absolute;left:435.00px;top:367.20000000000005px;font-size:15px;line-height:15px;font-weight:400;color:#85848F;white-space:pre;letter-spacing:-0.043px;">0xee44 ... 454b6f</div>
<svg style="position:absolute;left:592.2px;top:336.20000000000005px;" width="16" height="16" viewBox="0 0 16 16"><circle cx="8.0" cy="8.0" r="6.4" stroke="#151517" stroke-width="1.3" fill="none"/><path d="M8.0 7.3v4.34" stroke="#151517" stroke-width="1.4000000000000001"/><circle cx="8.0" cy="5.0600000000000005" r="0.84" fill="#151517"/></svg>
<svg style="position:absolute;left:589.5px;top:367.20000000000005px;" width="15" height="15" viewBox="0 0 15 15"><path d="M6 2.3H3.3a1.3 1.3 0 0 0-1.3 1.3v8.6a1.3 1.3 0 0 0 1.3 1.3h8.6a1.3 1.3 0 0 0 1.3-1.3V9.5M9 2.2h4v4M13 2.2L7.6 7.6" stroke="#8F8E98" stroke-width="1.2" fill="none" stroke-linecap="round" stroke-linejoin="round"/></svg>
<svg style="position:absolute;left:796px;top:351.95000000000005px;" width="16" height="16" viewBox="0 0 16 16"><path d="M1.5 14.5L14 2M7.2 1.8H14v6.8" stroke="#E84A4A" stroke-width="1.2" fill="none" stroke-linecap="round"/></svg>
<div style="position:absolute;left:829.80px;top:340.3px;font-size:15px;line-height:15px;font-weight:400;color:#1E1E22;white-space:pre;letter-spacing:-0.000px;">-2,000 USDC</div>
<div style="position:absolute;left:847.80px;top:363.6px;font-size:15px;line-height:15px;font-weight:400;color:#85848F;white-space:pre;letter-spacing:-0.242px;">1,999 USD</div>
<svg style="position:absolute;left:953.5px;top:352.35px;" width="16" height="16" viewBox="0 0 16 16"><path d="M1.6 13.9h8.4M2.6 13.9V2.4a.9.9 0 0 1 .9-.9h5.2a.9.9 0 0 1 .9.9v11.5M4.2 3.3h3.8v3.3H4.2zM9.6 7.8h1.6c.7 0 1.2.5 1.2 1.2v3c0 .9-.6 1.4-1.4 1.4" stroke="#E84A4A" stroke-width="1.1" fill="none" stroke-linejoin="round"/></svg>
<div style="position:absolute;left:982.20px;top:338.5px;font-size:15px;line-height:15px;font-weight:400;color:#1E1E22;white-space:pre;letter-spacing:0.049px;">·0.0003254</div>
<div style="position:absolute;left:1009.00px;top:365.7px;font-size:15px;line-height:15px;font-weight:400;color:#85848F;white-space:pre;letter-spacing:-0.386px;">0.6 USD</div>
<div style="position:absolute;left:1091px;top:346.75000000000006px;width:89.3px;height:26px;background:#EDF2FD;border-radius:4px;"></div>
<div style="position:absolute;left:1100.20px;top:355.3500000000001px;font-size:10px;line-height:10px;font-weight:700;color:#5B86EE;white-space:pre;letter-spacing:0.320px;">REVENUE</div>
<svg style="position:absolute;left:1157.5px;top:353.3500000000001px;" width="13" height="13" viewBox="0 0 13 13"><circle cx="6.5" cy="6.5" r="4.9" stroke="#5B86EE" stroke-width="1.1" fill="none"/><path d="M6.5 5.95v3.41" stroke="#5B86EE" stroke-width="1.2000000000000002"/><circle cx="6.5" cy="4.1899999999999995" r="0.6599999999999999" fill="#5B86EE"/></svg>
<svg style="position:absolute;left:1198px;top:351px;" width="16" height="18" viewBox="0 0 16 18"><path d="M11.4 1.8L2.4 10.3h4.9l-1.8 6.3 9-8.8H9.6z" fill="#151517" stroke="#151517" stroke-width="1" stroke-linejoin="round"/></svg>
<svg style="position:absolute;left:1254px;top:350.35px;" width="19" height="19" viewBox="0 0 19 19"><circle cx="9.2" cy="9.2" r="9.1" fill="#4700F5"/><path d="M6.2 8.6a3.1 3.1 0 0 1 5.5-1.3M12.2 9.8a3.1 3.1 0 0 1-5.5 1.3" stroke="#fff" stroke-width="1.4" fill="none" stroke-linecap="round"/><path d="M12.3 5.6v2.3h-2.3zM6.1 12.8v-2.3h2.3z" fill="#fff"/></svg>
<div style="position:absolute;left:1281.40px;top:351.55000000000007px;font-size:15px;line-height:15px;font-weight:400;color:#1E1E22;white-space:pre;letter-spacing:-0.320px;">Ready to Sync</div>
<div style="position:absolute;left:1281.4px;top:368.55000000000007px;width:93.4px;height:1.5px;background:#2A2A2E;border-radius:0;"></div>
<div style="position:absolute;left:1423px;top:348.75000000000006px;width:21.8px;height:21.8px;background:#DBDFFB;border-radius:4px;"></div>
<svg style="position:absolute;left:1423px;top:348.75000000000006px;" width="22" height="22" viewBox="0 0 22 22"><path d="M4.6 6.2h12.6l-6.3 10.2z" stroke="#5A62EE" stroke-width="1.3" fill="none" stroke-linejoin="round"/></svg>
<div style="position:absolute;left:1449.3px;top:348.75000000000006px;width:21.6px;height:21.6px;background:#EEEEF3;border-radius:4px;"></div>
<svg style="position:absolute;left:1449.3px;top:348.75000000000006px;" width="22" height="22" viewBox="0 0 22 22"><circle cx="10.8" cy="6" r="1.3" fill="#111"/><circle cx="10.8" cy="10.8" r="1.3" fill="#111"/><circle cx="10.8" cy="15.6" r="1.3" fill="#111"/></svg>
<div style="position:absolute;left:114.5px;top:425.35px;width:17.4px;height:17.4px;background:#FFFFFF;border:1px solid #D2D2D8;box-sizing:border-box;border-radius:4px;"></div>
<svg style="position:absolute;left:160.5px;top:429.05px;" width="9" height="11" viewBox="0 0 9 11"><path d="M1.6 1.6l5.4 3.9-5.4 3.9z" fill="#111" stroke="#111" stroke-width="1.2" stroke-linejoin="round"/></svg>
<svg style="position:absolute;left:179px;top:420.75px;" width="27" height="27" viewBox="0 0 27 27"><defs><linearGradient id="sg" x1="0" y1="1" x2="1" y2="0"><stop offset="0" stop-color="#9B3DF2"/><stop offset=".55" stop-color="#4E8FD8"/><stop offset="1" stop-color="#1ED79C"/></linearGradient></defs><circle cx="13.4" cy="13.4" r="13.3" fill="#000"/><path d="M8.6 6.9H21.3L18.5 10.2H5.8zM5.8 12.2H18.5L21.3 15.5H8.6zM8.6 17.4H21.3L18.5 21.1H5.8z" fill="url(#sg)"/></svg>
<div style="position:absolute;left:214.50px;top:411.5px;font-size:17px;line-height:17px;font-weight:400;color:#1C1C1E;white-space:pre;letter-spacing:0.001px;">Claim Tip From Staking</div>
<svg style="position:absolute;left:218px;top:442.90000000000003px;" width="15" height="15" viewBox="0 0 15 15"><circle cx="7.5" cy="7.5" r="6.2" stroke="#8F8E98" stroke-width="1.2" fill="none"/><path d="M7.5 4.3v3.4h2.6" stroke="#8F8E98" stroke-width="1.2" fill="none" stroke-linecap="round"/></svg>
<div style="position:absolute;left:238.60px;top:441.90000000000003px;font-size:15px;line-height:15px;font-weight:400;color:#85848F;white-space:pre;letter-spacing:-0.207px;">02:41:09 am, Feb 18, 26</div>
<div style="position:absolute;left:414.90px;top:441.90000000000003px;font-size:15px;line-height:15px;font-weight:400;color:#85848F;white-space:pre;transform:scaleX(1.4861);transform-origin:0 0;">#</div>
<div style="position:absolute;left:435.00px;top:441.90000000000003px;font-size:15px;line-height:15px;font-weight:400;color:#85848F;white-space:pre;letter-spacing:-0.284px;">1kyThQ ... oEBdL8</div>
<svg style="position:absolute;left:592.2px;top:410.90000000000003px;" width="16" height="16" viewBox="0 0 16 16"><circle cx="8.0" cy="8.0" r="6.4" stroke="#151517" stroke-width="1.3" fill="none"/><path d="M8.0 7.3v4.34" stroke="#151517" stroke-width="1.4000000000000001"/><circle cx="8.0" cy="5.0600000000000005" r="0.84" fill="#151517"/></svg>
<svg style="position:absolute;left:589.5px;top:441.90000000000003px;" width="15" height="15" viewBox="0 0 15 15"><path d="M6 2.3H3.3a1.3 1.3 0 0 0-1.3 1.3v8.6a1.3 1.3 0 0 0 1.3 1.3h8.6a1.3 1.3 0 0 0 1.3-1.3V9.5M9 2.2h4v4M13 2.2L7.6 7.6" stroke="#8F8E98" stroke-width="1.2" fill="none" stroke-linecap="round" stroke-linejoin="round"/></svg>
<svg style="position:absolute;left:643.5px;top:426.55px;" width="16" height="16" viewBox="0 0 16 16"><path d="M13.6 2.4L2.2 13.8M2.1 7.8v6h6" stroke="#168C5B" stroke-width="1.3" fill="none" stroke-linecap="round"/></svg>
<div style="position:absolute;left:673.80px;top:415.3px;font-size:15px;line-height:15px;font-weight:400;color:#1E1E22;white-space:pre;letter-spacing:-0.035px;">0.528649 S...</div>
<div style="position:absolute;left:699.00px;top:438.2px;font-size:15px;line-height:15px;font-weight:400;color:#85848F;white-space:pre;letter-spacing:-0.243px;">44.4 USD</div>
<div style="position:absolute;left:1091px;top:421.85px;width:96.3px;height:26px;background:#EDF2FD;border-radius:4px;"></div>
<div style="position:absolute;left:1100.20px;top:430.45000000000005px;font-size:10px;line-height:10px;font-weight:700;color:#5B86EE;white-space:pre;letter-spacing:0.431px;">STAKING...</div>
<svg style="position:absolute;left:1164.5px;top:428.45000000000005px;" width="13" height="13" viewBox="0 0 13 13"><circle cx="6.5" cy="6.5" r="4.9" stroke="#5B86EE" stroke-width="1.1" fill="none"/><path d="M6.5 5.95v3.41" stroke="#5B86EE" stroke-width="1.2000000000000002"/><circle cx="6.5" cy="4.1899999999999995" r="0.6599999999999999" fill="#5B86EE"/></svg>
<svg style="position:absolute;left:1254px;top:425.45px;" width="19" height="19" viewBox="0 0 19 19"><circle cx="9.2" cy="9.2" r="9.1" fill="#4700F5"/><path d="M6.2 8.6a3.1 3.1 0 0 1 5.5-1.3M12.2 9.8a3.1 3.1 0 0 1-5.5 1.3" stroke="#fff" stroke-width="1.4" fill="none" stroke-linecap="round"/><path d="M12.3 5.6v2.3h-2.3zM6.1 12.8v-2.3h2.3z" fill="#fff"/></svg>
<div style="position:absolute;left:1281.40px;top:426.65000000000003px;font-size:15px;line-height:15px;font-weight:400;color:#1E1E22;white-space:pre;letter-spacing:-0.320px;">Ready to Sync</div>
<div style="position:absolute;left:1281.4px;top:443.65000000000003px;width:93.4px;height:1.5px;background:#2A2A2E;border-radius:0;"></div>
<div style="position:absolute;left:1423px;top:423.85px;width:21.8px;height:21.8px;background:#DBDFFB;border-radius:4px;"></div>
<svg style="position:absolute;left:1423px;top:423.85px;" width="22" height="22" viewBox="0 0 22 22"><path d="M4.6 6.2h12.6l-6.3 10.2z" stroke="#5A62EE" stroke-width="1.3" fill="none" stroke-linejoin="round"/></svg>
<div style="position:absolute;left:1449.3px;top:423.85px;width:21.6px;height:21.6px;background:#EEEEF3;border-radius:4px;"></div>
<svg style="position:absolute;left:1449.3px;top:423.85px;" width="22" height="22" viewBox="0 0 22 22"><circle cx="10.8" cy="6" r="1.3" fill="#111"/><circle cx="10.8" cy="10.8" r="1.3" fill="#111"/><circle cx="10.8" cy="15.6" r="1.3" fill="#111"/></svg>
<div style="position:absolute;left:114.5px;top:499.00000000000006px;width:17.4px;height:17.4px;background:#FFFFFF;border:1px solid #D2D2D8;box-sizing:border-box;border-radius:4px;"></div>
<svg style="position:absolute;left:160.5px;top:502.70000000000005px;" width="9" height="11" viewBox="0 0 9 11"><path d="M1.6 1.6l5.4 3.9-5.4 3.9z" fill="#111" stroke="#111" stroke-width="1.2" stroke-linejoin="round"/></svg>
<div style="position:absolute;left:179px;top:494.40000000000003px;width:26.5px;height:26.5px;background:#4F97AF;border-radius:50%;"></div>
<div style="position:absolute;left:187.63px;top:500.9000000000001px;font-size:14px;line-height:14px;font-weight:400;color:#FFFFFF;white-space:pre;">P</div>
<div style="position:absolute;left:214.50px;top:487.0px;font-size:17px;line-height:17px;font-weight:400;color:#1C1C1E;white-space:pre;letter-spacing:0.191px;">Import Tx</div>
<svg style="position:absolute;left:218px;top:516.0px;" width="15" height="15" viewBox="0 0 15 15"><circle cx="7.5" cy="7.5" r="6.2" stroke="#8F8E98" stroke-width="1.2" fill="none"/><path d="M7.5 4.3v3.4h2.6" stroke="#8F8E98" stroke-width="1.2" fill="none" stroke-linecap="round"/></svg>
<div style="position:absolute;left:238.60px;top:515.0px;font-size:15px;line-height:15px;font-weight:400;color:#85848F;white-space:pre;letter-spacing:-0.172px;">02:02:33 am, Feb 18, 26</div>
<div style="position:absolute;left:414.90px;top:515.0px;font-size:15px;line-height:15px;font-weight:400;color:#85848F;white-space:pre;transform:scaleX(1.4861);transform-origin:0 0;">#</div>
<div style="position:absolute;left:435.00px;top:515.0px;font-size:15px;line-height:15px;font-weight:400;color:#85848F;white-space:pre;letter-spacing:-0.447px;">mJyG7T ... S3RmL8</div>
<svg style="position:absolute;left:592.2px;top:486.40000000000003px;" width="16" height="16" viewBox="0 0 16 16"><circle cx="8.0" cy="8.0" r="6.4" stroke="#151517" stroke-width="1.3" fill="none"/><path d="M8.0 7.3v4.34" stroke="#151517" stroke-width="1.4000000000000001"/><circle cx="8.0" cy="5.0600000000000005" r="0.84" fill="#151517"/></svg>
<svg style="position:absolute;left:643.5px;top:500.20000000000005px;" width="16" height="16" viewBox="0 0 16 16"><path d="M13.6 2.4L2.2 13.8M2.1 7.8v6h6" stroke="#168C5B" stroke-width="1.3" fill="none" stroke-linecap="round"/></svg>
<div style="position:absolute;left:673.90px;top:488.6px;font-size:15px;line-height:15px;font-weight:400;color:#1E1E22;white-space:pre;letter-spacing:0.188px;">557.99 AV...</div>
<div style="position:absolute;left:690.50px;top:511.9px;font-size:15px;line-height:15px;font-weight:400;color:#85848F;white-space:pre;letter-spacing:-0.197px;">5,072 USD</div>
<svg style="position:absolute;left:1096.5px;top:499.90000000000003px;" width="15.5" height="15.5" viewBox="0 0 15.5 15.5"><circle cx="7.75" cy="7.75" r="6.15" stroke="#1E1E22" stroke-width="1.2" fill="none"/><path d="M4.375 7.75h6.75M7.75 4.375v6.75" stroke="#1E1E22" stroke-width="1.2"/></svg>
<div style="position:absolute;left:1122.00px;top:498.2px;font-size:15px;line-height:15px;font-weight:400;color:#1E1E22;white-space:pre;letter-spacing:0.012px;">Add tag</div>
<div style="position:absolute;left:1122px;top:512.6px;width:42.7px;height:1.4px;background:#1E1E22;border-radius:0;"></div>
<svg style="position:absolute;left:1254px;top:499.1px;" width="19" height="19" viewBox="0 0 19 19"><circle cx="9.2" cy="9.2" r="9.1" fill="#4700F5"/><path d="M6.2 8.6a3.1 3.1 0 0 1 5.5-1.3M12.2 9.8a3.1 3.1 0 0 1-5.5 1.3" stroke="#fff" stroke-width="1.4" fill="none" stroke-linecap="round"/><path d="M12.3 5.6v2.3h-2.3zM6.1 12.8v-2.3h2.3z" fill="#fff"/></svg>
<div style="position:absolute;left:1281.40px;top:500.30000000000007px;font-size:15px;line-height:15px;font-weight:400;color:#1E1E22;white-space:pre;letter-spacing:-0.320px;">Ready to Sync</div>
<div style="position:absolute;left:1281.4px;top:517.3000000000001px;width:93.4px;height:1.5px;background:#2A2A2E;border-radius:0;"></div>
<div style="position:absolute;left:1449.3px;top:497.50000000000006px;width:21.6px;height:21.6px;background:#EEEEF3;border-radius:4px;"></div>
<svg style="position:absolute;left:1449.3px;top:497.50000000000006px;" width="22" height="22" viewBox="0 0 22 22"><circle cx="10.8" cy="6" r="1.3" fill="#111"/><circle cx="10.8" cy="10.8" r="1.3" fill="#111"/><circle cx="10.8" cy="15.6" r="1.3" fill="#111"/></svg>
<div style="position:absolute;left:114.5px;top:572.5px;width:17.4px;height:17.4px;background:#FFFFFF;border:1px solid #D2D2D8;box-sizing:border-box;border-radius:4px;"></div>
<svg style="position:absolute;left:160.5px;top:576.2px;" width="9" height="11" viewBox="0 0 9 11"><path d="M1.6 1.6l5.4 3.9-5.4 3.9z" fill="#111" stroke="#111" stroke-width="1.2" stroke-linejoin="round"/></svg>
<svg style="position:absolute;left:179px;top:567.9000000000001px;" width="27" height="27" viewBox="0 0 27 27"><circle cx="13.3" cy="13.3" r="13.1" fill="#E9E9EB"/><path d="M13.3 3.2L6.5 14.4l6.8 4 6.8-4z" fill="#3A3A3A"/><path d="M13.3 3.2v15.2l6.8-4z" fill="#161616"/><path d="M13.3 19.8l-6.8-4 6.8 9.4 6.8-9.4z" fill="#555"/><path d="M13.3 19.8v5.4l6.8-9.4z" fill="#262626"/></svg>
<div style="position:absolute;left:214.50px;top:558.8000000000001px;font-size:17px;line-height:17px;font-weight:400;color:#1C1C1E;white-space:pre;letter-spacing:-0.328px;">Swap Tokens</div>
<svg style="position:absolute;left:218px;top:590.2px;" width="15" height="15" viewBox="0 0 15 15"><circle cx="7.5" cy="7.5" r="6.2" stroke="#8F8E98" stroke-width="1.2" fill="none"/><path d="M7.5 4.3v3.4h2.6" stroke="#8F8E98" stroke-width="1.2" fill="none" stroke-linecap="round"/></svg>
<div style="position:absolute;left:238.60px;top:589.2px;font-size:15px;line-height:15px;font-weight:400;color:#85848F;white-space:pre;letter-spacing:-0.172px;">01:05:23 am, Feb 18, 26</div>
<div style="position:absolute;left:414.90px;top:589.2px;font-size:15px;line-height:15px;font-weight:400;color:#85848F;white-space:pre;transform:scaleX(1.4861);transform-origin:0 0;">#</div>
<div style="position:absolute;left:435.00px;top:589.2px;font-size:15px;line-height:15px;font-weight:400;color:#85848F;white-space:pre;letter-spacing:0.004px;">0x4f54 ... 6eb173</div>
<svg style="position:absolute;left:592.2px;top:558.2px;" width="16" height="16" viewBox="0 0 16 16"><circle cx="8.0" cy="8.0" r="6.4" stroke="#151517" stroke-width="1.3" fill="none"/><path d="M8.0 7.3v4.34" stroke="#151517" stroke-width="1.4000000000000001"/><circle cx="8.0" cy="5.0600000000000005" r="0.84" fill="#151517"/></svg>
<svg style="position:absolute;left:589.5px;top:589.2px;" width="15" height="15" viewBox="0 0 15 15"><path d="M6 2.3H3.3a1.3 1.3 0 0 0-1.3 1.3v8.6a1.3 1.3 0 0 0 1.3 1.3h8.6a1.3 1.3 0 0 0 1.3-1.3V9.5M9 2.2h4v4M13 2.2L7.6 7.6" stroke="#8F8E98" stroke-width="1.2" fill="none" stroke-linecap="round" stroke-linejoin="round"/></svg>
<svg style="position:absolute;left:643.5px;top:573.7px;" width="16" height="16" viewBox="0 0 16 16"><path d="M13.6 2.4L2.2 13.8M2.1 7.8v6h6" stroke="#168C5B" stroke-width="1.3" fill="none" stroke-linecap="round"/></svg>
<div style="position:absolute;left:682.50px;top:561.9px;font-size:15px;line-height:15px;font-weight:400;color:#1E1E22;white-space:pre;letter-spacing:0.322px;">1,456 OHM</div>
<div style="position:absolute;left:681.30px;top:584.7px;font-size:15px;line-height:15px;font-weight:400;color:#85848F;white-space:pre;letter-spacing:-0.092px;">25,308 USD</div>
<svg style="position:absolute;left:796px;top:574.2px;" width="16" height="16" viewBox="0 0 16 16"><path d="M1.5 14.5L14 2M7.2 1.8H14v6.8" stroke="#E84A4A" stroke-width="1.2" fill="none" stroke-linecap="round"/></svg>
<div style="position:absolute;left:825.90px;top:561.9px;font-size:15px;line-height:15px;font-weight:400;color:#1E1E22;white-space:pre;letter-spacing:-0.076px;">-25,327 US...</div>
<div style="position:absolute;left:838.50px;top:584.7px;font-size:15px;line-height:15px;font-weight:400;color:#85848F;white-space:pre;letter-spacing:-0.112px;">25,308 USD</div>
<div style="position:absolute;left:1091px;top:569.0px;width:69.6px;height:26px;background:#EDF2FD;border-radius:4px;"></div>
<div style="position:absolute;left:1100.20px;top:577.6px;font-size:10px;line-height:10px;font-weight:700;color:#5B86EE;white-space:pre;letter-spacing:0.587px;">SWAP</div>
<svg style="position:absolute;left:1137.8px;top:575.6px;" width="13" height="13" viewBox="0 0 13 13"><circle cx="6.5" cy="6.5" r="4.9" stroke="#5B86EE" stroke-width="1.1" fill="none"/><path d="M6.5 5.95v3.41" stroke="#5B86EE" stroke-width="1.2000000000000002"/><circle cx="6.5" cy="4.1899999999999995" r="0.6599999999999999" fill="#5B86EE"/></svg>
<svg style="position:absolute;left:1254px;top:572.6px;" width="19" height="19" viewBox="0 0 19 19"><circle cx="9.2" cy="9.2" r="9.1" fill="#4700F5"/><path d="M6.2 8.6a3.1 3.1 0 0 1 5.5-1.3M12.2 9.8a3.1 3.1 0 0 1-5.5 1.3" stroke="#fff" stroke-width="1.4" fill="none" stroke-linecap="round"/><path d="M12.3 5.6v2.3h-2.3zM6.1 12.8v-2.3h2.3z" fill="#fff"/></svg>
<div style="position:absolute;left:1281.40px;top:573.8000000000001px;font-size:15px;line-height:15px;font-weight:400;color:#1E1E22;white-space:pre;letter-spacing:-0.320px;">Ready to Sync</div>
<div style="position:absolute;left:1281.4px;top:590.8000000000001px;width:93.4px;height:1.5px;background:#2A2A2E;border-radius:0;"></div>
<div style="position:absolute;left:1423px;top:571.0px;width:21.8px;height:21.8px;background:#DBDFFB;border-radius:4px;"></div>
<svg style="position:absolute;left:1423px;top:571.0px;" width="22" height="22" viewBox="0 0 22 22"><path d="M4.6 6.2h12.6l-6.3 10.2z" stroke="#5A62EE" stroke-width="1.3" fill="none" stroke-linejoin="round"/></svg>
<div style="position:absolute;left:1449.3px;top:571.0px;width:21.6px;height:21.6px;background:#EEEEF3;border-radius:4px;"></div>
<svg style="position:absolute;left:1449.3px;top:571.0px;" width="22" height="22" viewBox="0 0 22 22"><circle cx="10.8" cy="6" r="1.3" fill="#111"/><circle cx="10.8" cy="10.8" r="1.3" fill="#111"/><circle cx="10.8" cy="15.6" r="1.3" fill="#111"/></svg>
<div style="position:absolute;left:114.5px;top:647.5999999999999px;width:17.4px;height:17.4px;background:#FFFFFF;border:1px solid #D2D2D8;box-sizing:border-box;border-radius:4px;"></div>
<svg style="position:absolute;left:160.5px;top:651.3px;" width="9" height="11" viewBox="0 0 9 11"><path d="M1.6 1.6l5.4 3.9-5.4 3.9z" fill="#111" stroke="#111" stroke-width="1.2" stroke-linejoin="round"/></svg>
<svg style="position:absolute;left:179px;top:643.0px;" width="27" height="27" viewBox="0 0 27 27"><circle cx="13.4" cy="13.4" r="13.3" fill="#7A2CF1"/><g stroke="#fff" stroke-width="1" fill="none"><circle cx="13.4" cy="13.1" r="9"/><ellipse cx="13.4" cy="13.1" rx="8.6" ry="4.2" transform="rotate(38 13.4 13.1)"/><path d="M13.6 4.2c-.8 3-.9 12.5.6 17.7M5.3 9.4c3.6 1.5 10.8 1.7 15.9-3.2M8 19.5c3-2.8 8.7-5.3 13.8-3.4"/></g></svg>
<div style="position:absolute;left:214.50px;top:634.0px;font-size:17px;line-height:17px;font-weight:400;color:#1C1C1E;white-space:pre;letter-spacing:0.048px;">Accrued Daily Rewards</div>
<svg style="position:absolute;left:218px;top:665.4px;" width="15" height="15" viewBox="0 0 15 15"><circle cx="7.5" cy="7.5" r="6.2" stroke="#8F8E98" stroke-width="1.2" fill="none"/><path d="M7.5 4.3v3.4h2.6" stroke="#8F8E98" stroke-width="1.2" fill="none" stroke-linecap="round"/></svg>
<div style="position:absolute;left:238.60px;top:664.4px;font-size:15px;line-height:15px;font-weight:400;color:#85848F;white-space:pre;letter-spacing:-0.124px;">11:59:59 pm, Feb 17, 26</div>
<div style="position:absolute;left:414.90px;top:664.4px;font-size:15px;line-height:15px;font-weight:400;color:#85848F;white-space:pre;transform:scaleX(1.4861);transform-origin:0 0;">#</div>
<div style="position:absolute;left:435.00px;top:664.4px;font-size:15px;line-height:15px;font-weight:400;color:#85848F;white-space:pre;letter-spacing:-0.122px;">celest ... 372799</div>
<svg style="position:absolute;left:592.2px;top:633.4px;" width="16" height="16" viewBox="0 0 16 16"><circle cx="8.0" cy="8.0" r="6.4" stroke="#151517" stroke-width="1.3" fill="none"/><path d="M8.0 7.3v4.34" stroke="#151517" stroke-width="1.4000000000000001"/><circle cx="8.0" cy="5.0600000000000005" r="0.84" fill="#151517"/></svg>
<svg style="position:absolute;left:589.5px;top:664.4px;" width="15" height="15" viewBox="0 0 15 15"><path d="M6 2.3H3.3a1.3 1.3 0 0 0-1.3 1.3v8.6a1.3 1.3 0 0 0 1.3 1.3h8.6a1.3 1.3 0 0 0 1.3-1.3V9.5M9 2.2h4v4M13 2.2L7.6 7.6" stroke="#8F8E98" stroke-width="1.2" fill="none" stroke-linecap="round" stroke-linejoin="round"/></svg>
<svg style="position:absolute;left:643.5px;top:648.8px;" width="16" height="16" viewBox="0 0 16 16"><path d="M13.6 2.4L2.2 13.8M2.1 7.8v6h6" stroke="#168C5B" stroke-width="1.3" fill="none" stroke-linecap="round"/></svg>
<div style="position:absolute;left:677.40px;top:636.3px;font-size:15px;line-height:15px;font-weight:400;color:#1E1E22;white-space:pre;letter-spacing:-0.197px;">168.34 S.TIA</div>
<div style="position:absolute;left:699.60px;top:659.4px;font-size:15px;line-height:15px;font-weight:400;color:#85848F;white-space:pre;letter-spacing:-0.318px;">57.3 USD</div>
<div style="position:absolute;left:1091px;top:644.0999999999999px;width:96.3px;height:26px;background:#EDF2FD;border-radius:4px;"></div>
<div style="position:absolute;left:1100.20px;top:652.6999999999999px;font-size:10px;line-height:10px;font-weight:700;color:#5B86EE;white-space:pre;letter-spacing:0.219px;">ACCRUE...</div>
<svg style="position:absolute;left:1164.5px;top:650.6999999999999px;" width="13" height="13" viewBox="0 0 13 13"><circle cx="6.5" cy="6.5" r="4.9" stroke="#5B86EE" stroke-width="1.1" fill="none"/><path d="M6.5 5.95v3.41" stroke="#5B86EE" stroke-width="1.2000000000000002"/><circle cx="6.5" cy="4.1899999999999995" r="0.6599999999999999" fill="#5B86EE"/></svg>
<svg style="position:absolute;left:1254px;top:647.6999999999999px;" width="19" height="19" viewBox="0 0 19 19"><circle cx="9.2" cy="9.2" r="9.1" fill="#4700F5"/><path d="M6.2 8.6a3.1 3.1 0 0 1 5.5-1.3M12.2 9.8a3.1 3.1 0 0 1-5.5 1.3" stroke="#fff" stroke-width="1.4" fill="none" stroke-linecap="round"/><path d="M12.3 5.6v2.3h-2.3zM6.1 12.8v-2.3h2.3z" fill="#fff"/></svg>
<div style="position:absolute;left:1281.40px;top:648.9px;font-size:15px;line-height:15px;font-weight:400;color:#1E1E22;white-space:pre;letter-spacing:-0.320px;">Ready to Sync</div>
<div style="position:absolute;left:1281.4px;top:665.9px;width:93.4px;height:1.5px;background:#2A2A2E;border-radius:0;"></div>
<div style="position:absolute;left:1449.3px;top:646.0999999999999px;width:21.6px;height:21.6px;background:#EEEEF3;border-radius:4px;"></div>
<svg style="position:absolute;left:1449.3px;top:646.0999999999999px;" width="22" height="22" viewBox="0 0 22 22"><circle cx="10.8" cy="6" r="1.3" fill="#111"/><circle cx="10.8" cy="10.8" r="1.3" fill="#111"/><circle cx="10.8" cy="15.6" r="1.3" fill="#111"/></svg>
<div style="position:absolute;left:1505px;top:113px;width:6px;height:292px;background:#A9A8B0;border-radius:3px;"></div>
</div></body></html>
